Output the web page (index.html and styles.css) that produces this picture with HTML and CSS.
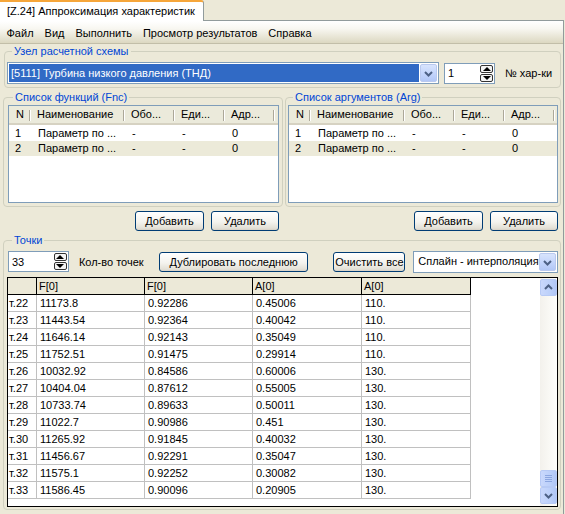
FILE: index.html
```html
<!DOCTYPE html>
<html lang="ru">
<head>
    <meta charset="UTF-8">
    <title>[Z.24] Аппроксимация характеристик</title>
    <link rel="stylesheet" href="styles.css">
</head>
<body>
    <div class="tabs">
        <div class="tab">[Z.24] Аппроксимация характеристик</div>
    </div>

    <div class="window">
        <div class="menubar">
            <span class="menu-item">Файл</span>
            <span class="menu-item">Вид</span>
            <span class="menu-item">Выполнить</span>
            <span class="menu-item">Просмотр результатов</span>
            <span class="menu-item">Справка</span>
        </div>

        <div class="content">
            <!-- узел -->
            <fieldset class="group group-node">
                <legend>Узел расчетной схемы</legend>
                <div class="node-row">
                    <div class="combo combo-node">
                        <div class="combo-text selected">[5111] Турбина низкого давления (ТНД)</div>
                        <div class="combo-btn">
                            <svg width="17" height="19" viewBox="0 0 17 19"><path d="M5 8 L8.5 11.5 L12 8" fill="none" stroke="#4d6185" stroke-width="2"/></svg>
                        </div>
                    </div>
                    <div class="spin spin-num">
                        <span class="spin-text">1</span>
                        <div class="spin-btns">
                            <div class="spin-up"></div>
                            <div class="spin-down"></div>
                        </div>
                    </div>
                    <span class="label">№ хар-ки</span>
                </div>
            </fieldset>

            <div class="lists">
                <fieldset class="group group-fnc">
                    <legend>Список функций (Fnc)</legend>
                    <div class="listview">
                        <div class="lv-head">
                            <div class="lv-col c-n">N</div>
                            <div class="lv-col c-name">Наименование</div>
                            <div class="lv-col c-obo">Обо...</div>
                            <div class="lv-col c-ed">Еди...</div>
                            <div class="lv-col c-adr">Адр...</div>
                        </div>
                        <div class="lv-row">
                            <div class="lv-cell c-n">1</div>
                            <div class="lv-cell c-name">Параметр по ...</div>
                            <div class="lv-cell c-obo">-</div>
                            <div class="lv-cell c-ed">-</div>
                            <div class="lv-cell c-adr">0</div>
                        </div>
                        <div class="lv-row alt">
                            <div class="lv-cell c-n">2</div>
                            <div class="lv-cell c-name">Параметр по ...</div>
                            <div class="lv-cell c-obo">-</div>
                            <div class="lv-cell c-ed">-</div>
                            <div class="lv-cell c-adr">0</div>
                        </div>
                    </div>
                </fieldset>

                <fieldset class="group group-arg">
                    <legend>Список аргументов (Arg)</legend>
                    <div class="listview">
                        <div class="lv-head">
                            <div class="lv-col c-n">N</div>
                            <div class="lv-col c-name">Наименование</div>
                            <div class="lv-col c-obo">Обо...</div>
                            <div class="lv-col c-ed">Еди...</div>
                            <div class="lv-col c-adr">Адр...</div>
                        </div>
                        <div class="lv-row">
                            <div class="lv-cell c-n">1</div>
                            <div class="lv-cell c-name">Параметр по ...</div>
                            <div class="lv-cell c-obo">-</div>
                            <div class="lv-cell c-ed">-</div>
                            <div class="lv-cell c-adr">0</div>
                        </div>
                        <div class="lv-row alt">
                            <div class="lv-cell c-n">2</div>
                            <div class="lv-cell c-name">Параметр по ...</div>
                            <div class="lv-cell c-obo">-</div>
                            <div class="lv-cell c-ed">-</div>
                            <div class="lv-cell c-adr">0</div>
                        </div>
                    </div>
                </fieldset>
            </div>

            <div class="btn-row">
                <div class="btn-half left">
                    <button class="btn btn-add">Добавить</button>
                    <button class="btn btn-del">Удалить</button>
                </div>
                <div class="btn-half right">
                    <button class="btn btn-add">Добавить</button>
                    <button class="btn btn-del">Удалить</button>
                </div>
            </div>

            <!-- точки -->
            <fieldset class="group group-points">
                <legend>Точки</legend>
                <div class="points-bar">
                    <div class="spin spin-count">
                        <span class="spin-text">33</span>
                        <div class="spin-btns">
                            <div class="spin-up"></div>
                            <div class="spin-down"></div>
                        </div>
                    </div>
                    <span class="label label-count">Кол-во точек</span>
                    <button class="btn btn-dup">Дублировать последнюю</button>
                    <button class="btn btn-clear">Очистить все</button>
                    <div class="combo combo-method">
                        <div class="combo-text">Сплайн - интерполяция</div>
                        <div class="combo-btn">
                            <svg width="17" height="19" viewBox="0 0 17 19"><path d="M5 8 L8.5 11.5 L12 8" fill="none" stroke="#4d6185" stroke-width="2"/></svg>
                        </div>
                    </div>
                </div>

                <div class="grid">
                    <div class="grid-body">
                        <table class="grid-table">
                            <thead>
                                <tr><th class="rh"></th><th>F[0]</th><th>F[0]</th><th>A[0]</th><th>A[0]</th></tr>
                            </thead>
                            <tbody>
                                <tr><td class="rh">т.22</td><td>11173.8</td><td>0.92286</td><td>0.45006</td><td>110.</td></tr>
                                <tr><td class="rh">т.23</td><td>11443.54</td><td>0.92364</td><td>0.40042</td><td>110.</td></tr>
                                <tr><td class="rh">т.24</td><td>11646.14</td><td>0.92143</td><td>0.35049</td><td>110.</td></tr>
                                <tr><td class="rh">т.25</td><td>11752.51</td><td>0.91475</td><td>0.29914</td><td>110.</td></tr>
                                <tr><td class="rh">т.26</td><td>10032.92</td><td>0.84586</td><td>0.60006</td><td>130.</td></tr>
                                <tr><td class="rh">т.27</td><td>10404.04</td><td>0.87612</td><td>0.55005</td><td>130.</td></tr>
                                <tr><td class="rh">т.28</td><td>10733.74</td><td>0.89633</td><td>0.50011</td><td>130.</td></tr>
                                <tr><td class="rh">т.29</td><td>11022.7</td><td>0.90986</td><td>0.451</td><td>130.</td></tr>
                                <tr><td class="rh">т.30</td><td>11265.92</td><td>0.91845</td><td>0.40032</td><td>130.</td></tr>
                                <tr><td class="rh">т.31</td><td>11456.67</td><td>0.92291</td><td>0.35047</td><td>130.</td></tr>
                                <tr><td class="rh">т.32</td><td>11575.1</td><td>0.92252</td><td>0.30082</td><td>130.</td></tr>
                                <tr><td class="rh">т.33</td><td>11586.45</td><td>0.90096</td><td>0.20905</td><td>130.</td></tr>
                            </tbody>
                        </table>
                    </div>
                    <div class="scrollbar">
                        <div class="sb-btn">
                            <svg width="15" height="15" viewBox="0 0 15 15"><path d="M4 9 L7.5 5.5 L11 9" fill="none" stroke="#4d6185" stroke-width="2"/></svg>
                        </div>
                        <div class="sb-track">
                            <div class="sb-thumb">
                                <svg width="15" height="15" viewBox="0 0 15 15"><path d="M4 4.5 H11 M4 6.5 H11 M4 8.5 H11 M4 10.5 H11" stroke="#8ca6e0" stroke-width="1"/></svg>
                            </div>
                        </div>
                        <div class="sb-btn">
                            <svg width="15" height="15" viewBox="0 0 15 15"><path d="M4 6 L7.5 9.5 L11 6" fill="none" stroke="#4d6185" stroke-width="2"/></svg>
                        </div>
                    </div>
                </div>
            </fieldset>
        </div>
    </div>
</body>
</html>
```

FILE: styles.css
```css
* {
    margin: 0;
    padding: 0;
    box-sizing: border-box;
}

body {
    width: 565px;
    height: 514px;
    overflow: hidden;
    background: #ece9d8;
    font-family: "Liberation Sans", Arial, sans-serif;
    font-size: 11px;
    color: #000;
}

/* tab strip */
.tabs {
    height: 20px;
    display: flex;
}

.tab {
    position: relative;
    z-index: 1;
    width: 204px;
    height: 21px;
    background: #fff;
    border-top: 2px solid #f6a63a;
    border-right: 1px solid #919b9c;
    border-radius: 0 3px 0 0;
    padding: 2px 0 0 7px;
    line-height: 14px;
    white-space: nowrap;
}

.window {
    width: 564px;
    height: 494px;
    border-top: 1px solid #919b9c;
    border-right: 1px solid #919b9c;
}

.menubar {
    height: 23px;
    display: flex;
    align-items: center;
    padding: 2px 0 0 1px;
    background: linear-gradient(#ffffff 0%, #f8f7f1 35%, #dcd8c1 100%);
    border-bottom: 1px solid #c2bea8;
}

.menu-item {
    padding: 0 5.5px;
}

.content {
    padding: 0 2px 0 3px;
}

/* group boxes */
.group {
    border: 1px solid #d0d0bf;
    border-radius: 4px;
    min-width: 0;
}

.group legend {
    margin-left: 5px;
    padding: 0 2px;
    color: #0046d5;
    line-height: 13px;
}

.group-node {
    margin: 1px 0 0 1px;
    padding: 4px 3px 3px 2px;
}

.node-row {
    display: flex;
    align-items: center;
}

.label {
    white-space: nowrap;
}

/* combo */
.combo {
    display: flex;
    height: 22px;
    border: 1px solid #7f9db9;
    background: #fff;
    padding: 1px;
}

.combo-node {
    width: 432px;
}

.combo-text {
    flex: 1;
    padding-left: 2px;
    line-height: 18px;
    white-space: nowrap;
    overflow: hidden;
}

.combo-text.selected {
    background: #316ac5;
    color: #fff;
    margin-right: 1px;
}

.combo-btn {
    width: 17px;
    height: 18px;
    border: 1px solid #b9c9ef;
    border-radius: 2px;
    background: linear-gradient(#d8e4fd, #c1d3fb 60%, #b2c7f6);
    overflow: hidden;
}

.combo-btn svg {
    display: block;
    margin: -1px 0 0 -1px;
}

/* spin boxes */
.spin {
    display: flex;
    align-items: center;
    height: 21px;
    border: 1px solid #7f9db9;
    background: #fff;
    padding: 0 1px 0 3px;
}

.spin-num {
    width: 51px;
    margin: 0 10px 0 5px;
}

.spin-count {
    width: 61px;
    margin-left: 1px;
}

.spin-text {
    flex: 1;
}

.spin-btns {
    display: flex;
    flex-direction: column;
    gap: 1px;
    width: 13px;
}

.spin-up,
.spin-down {
    height: 8px;
    border: 1px solid #333;
    border-radius: 2px;
    background: #f4f4f4;
    display: flex;
    align-items: center;
    justify-content: center;
}

.spin-up::after {
    content: "";
    border: 4px solid transparent;
    border-top: 0;
    border-bottom: 4px solid #000;
}

.spin-down::after {
    content: "";
    border: 4px solid transparent;
    border-bottom: 0;
    border-top: 4px solid #000;
}

/* function / argument lists */
.lists {
    display: flex;
    gap: 2px;
    margin-top: 3px;
}

.group-fnc {
    width: 280px;
    padding: 1px 3px 3px 4px;
}

.group-arg {
    flex: 1;
    padding: 1px 2px 3px 2px;
}

.listview {
    height: 98px;
    border: 1px solid #7f9db9;
    background: #fff;
}

.lv-head {
    display: flex;
    height: 19px;
    background: #ebeadb;
    border-bottom: 2px solid #d6d2c2;
}

.lv-col {
    position: relative;
    line-height: 17px;
    padding-left: 6px;
    white-space: nowrap;
}

.lv-col::after {
    content: "";
    position: absolute;
    right: 0;
    top: 4px;
    height: 11px;
    border-left: 1px solid #aca899;
    border-right: 1px solid #fff;
}

.c-n { width: 22px; }
.c-name { width: 94px; }
.c-obo { width: 50px; }
.c-ed { width: 50px; }
.c-adr { width: 50px; }

.lv-head .c-n {
    padding-left: 0;
    text-align: center;
}

.lv-row {
    display: flex;
    height: 15px;
    line-height: 15px;
    margin-top: 1px;
}

.lv-row + .lv-row {
    margin-top: 0;
}

.lv-row.alt {
    background: #ecead9;
}

.lv-cell {
    padding-left: 7px;
    white-space: nowrap;
}

.lv-row .c-n {
    padding-left: 6px;
}

/* buttons */
.btn-row {
    display: flex;
    gap: 2px;
    margin-top: 4px;
}

.btn-half {
    display: flex;
    justify-content: flex-end;
    gap: 7px;
}

.btn-half.left {
    width: 280px;
    padding-right: 4px;
}

.btn-half.right {
    flex: 1;
    padding-right: 3px;
}

.btn {
    height: 20px;
    font-family: inherit;
    font-size: 11px;
    color: #000;
    border: 1px solid #003c74;
    border-radius: 3px;
    background: linear-gradient(#ffffff 0%, #f4f3ee 55%, #e3e0d6 90%, #d6d0c5 100%);
    white-space: nowrap;
}

.btn-add { width: 69px; }
.btn-del { width: 68px; }

/* points */
.group-points {
    margin-top: 3px;
    padding: 3px 2px 2px 3px;
}

.points-bar {
    display: flex;
    align-items: center;
    height: 23px;
}

.label-count {
    margin-left: 10px;
    width: 80px;
}

.btn-dup {
    width: 150px;
}

.btn-clear {
    width: 72px;
    margin-left: 25px;
    padding: 0;
}

.combo-method {
    width: 145px;
    margin-left: 8px;
}

.combo-method .combo-text {
    padding-left: 3px;
    line-height: 17px;
}

/* data grid */
.grid {
    display: flex;
    height: 230px;
    margin-top: 4px;
    border: 1px solid #000;
    background: #fff;
}

.grid-body {
    flex: 1;
}

.grid-table {
    table-layout: fixed;
    width: 463px;
    border-collapse: separate;
    border-spacing: 0;
}

.grid-table th,
.grid-table td {
    height: 17px;
    border-right: 1px solid #c0c0c0;
    border-bottom: 1px solid #c0c0c0;
    text-align: left;
    white-space: nowrap;
    overflow: hidden;
    font-weight: normal;
    line-height: 15px;
}

.grid-table th {
    background: #ece9d8;
    border-right-color: #000;
    border-bottom-color: #000;
    padding-left: 2px;
}

.grid-table td {
    padding-left: 3px;
}

.grid-table col,
.grid-table .rh {
    width: 29px;
}

.grid-table td.rh {
    padding-left: 1px;
}

.grid-table th:nth-child(2),
.grid-table th:nth-child(3) {
    width: 108px;
}

.grid-table th:nth-child(4),
.grid-table th:nth-child(5) {
    width: 109px;
}

/* scrollbar */
.scrollbar {
    width: 17px;
    display: flex;
    flex-direction: column;
    padding: 1px 0 2px;
    background: linear-gradient(to right, #f3f1ec, #fefefb);
}

.sb-btn,
.sb-thumb {
    height: 17px;
    border: 1px solid #b7caf5;
    border-radius: 2px;
    background: linear-gradient(to right, #c9d8fc, #bcd0fa 60%, #b0c6f6);
}

.sb-btn svg,
.sb-thumb svg {
    display: block;
}

.sb-track {
    flex: 1;
    display: flex;
    flex-direction: column;
    justify-content: flex-end;
}
```
